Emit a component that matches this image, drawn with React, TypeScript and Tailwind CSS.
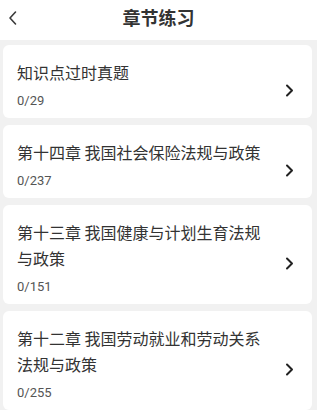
const chapters = [
  { title: "知识点过时真题", done: 0, total: 29 },
  { title: "第十四章 我国社会保险法规与政策", done: 0, total: 237 },
  { title: "第十三章 我国健康与计划生育法规与政策", done: 0, total: 151 },
  { title: "第十二章 我国劳动就业和劳动关系法规与政策", done: 0, total: 255 },
]

function Chevron({ dir }: { dir: "left" | "right" }) {
  if (dir === "left") {
    return (
      <svg width="10" height="16" viewBox="0 0 10 16" fill="none">
        <path d="M7.5 2L2 8l5.5 6" stroke="#3a3a3a" strokeWidth="1.6" strokeLinecap="round" strokeLinejoin="round" />
      </svg>
    )
  }
  return (
    <svg width="9" height="13" viewBox="0 0 9 13" fill="none">
      <path d="M2 1.5l5 5-5 5" stroke="#222" strokeWidth="2" strokeLinecap="round" strokeLinejoin="round" />
    </svg>
  )
}

function App() {
  return (
    <div className="w-[317px] h-[410px] overflow-hidden bg-[#f1f1f1] font-['Noto_Sans_CJK_SC',sans-serif]">
      <header className="h-10 bg-white flex items-center relative">
        <div className="absolute left-[8px] top-[10px]">
          <Chevron dir="left" />
        </div>
        <h1 className="w-full text-center text-[18px] font-bold text-[#333] leading-[30px] -mt-[6px]">章节练习</h1>
      </header>
      <main className="flex flex-col gap-[7px] pt-[5px] pl-[3px] pr-[5px]">
        {chapters.map(ch => (
          <div key={ch.title} className="bg-white rounded-[6px] flex items-center pl-[14px] pr-[18px] pt-[14px] pb-[8px]">
            <div className="flex-1 min-w-0 pr-[10px]">
              <p className="text-[16px] leading-[26px] text-[#333]">{ch.title}</p>
              <p className="mt-[7px] text-[13px] leading-[18px] text-[#555] font-['Roboto',sans-serif]">{ch.done}/{ch.total}</p>
            </div>
            <div className="mt-[12px]">
              <Chevron dir="right" />
            </div>
          </div>
        ))}
      </main>
    </div>
  )
}

export default App
